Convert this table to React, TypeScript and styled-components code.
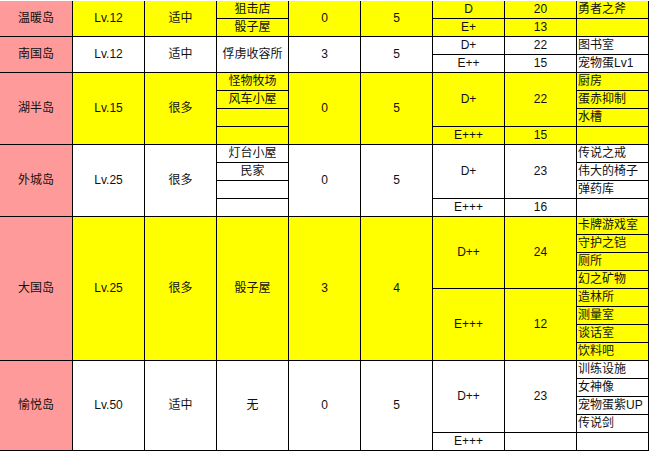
import styled, { createGlobalStyle } from "styled-components";

type Tone = "yellow" | "white";

type Rank = { grade: string; score: string; span: number };

type Island = {
  name: string;
  lv: string;
  amount: string;
  tone: Tone;
  rows: number;
  buildings: string[];
  low: string;
  high: string;
  ranks: Rank[];
  facilities: string[];
};

const ROW = 18;

const islands: Island[] = [
  {
    name: "温暖岛",
    lv: "Lv.12",
    amount: "适中",
    tone: "yellow",
    rows: 2,
    buildings: ["狙击店", "骰子屋"],
    low: "0",
    high: "5",
    ranks: [
      { grade: "D", score: "20", span: 1 },
      { grade: "E+", score: "13", span: 1 },
    ],
    facilities: ["勇者之斧", ""],
  },
  {
    name: "南国岛",
    lv: "Lv.12",
    amount: "适中",
    tone: "white",
    rows: 2,
    buildings: ["俘虏收容所"],
    low: "3",
    high: "5",
    ranks: [
      { grade: "D+", score: "22", span: 1 },
      { grade: "E++", score: "15", span: 1 },
    ],
    facilities: ["图书室", "宠物蛋Lv1"],
  },
  {
    name: "湖半岛",
    lv: "Lv.15",
    amount: "很多",
    tone: "yellow",
    rows: 4,
    buildings: ["怪物牧场", "风车小屋", "", ""],
    low: "0",
    high: "5",
    ranks: [
      { grade: "D+", score: "22", span: 3 },
      { grade: "E+++", score: "15", span: 1 },
    ],
    facilities: ["厨房", "蛋赤抑制", "水槽", ""],
  },
  {
    name: "外城岛",
    lv: "Lv.25",
    amount: "很多",
    tone: "white",
    rows: 4,
    buildings: ["灯台小屋", "民家", "", ""],
    low: "0",
    high: "5",
    ranks: [
      { grade: "D+", score: "23", span: 3 },
      { grade: "E+++", score: "16", span: 1 },
    ],
    facilities: ["传说之戒", "伟大的椅子", "弹药库", ""],
  },
  {
    name: "大国岛",
    lv: "Lv.25",
    amount: "很多",
    tone: "yellow",
    rows: 8,
    buildings: ["骰子屋"],
    low: "3",
    high: "4",
    ranks: [
      { grade: "D++", score: "24", span: 4 },
      { grade: "E+++", score: "12", span: 4 },
    ],
    facilities: [
      "卡牌游戏室",
      "守护之铠",
      "厕所",
      "幻之矿物",
      "造林所",
      "测量室",
      "谈话室",
      "饮料吧",
    ],
  },
  {
    name: "愉悦岛",
    lv: "Lv.50",
    amount: "适中",
    tone: "white",
    rows: 5,
    buildings: ["无"],
    low: "0",
    high: "5",
    ranks: [
      { grade: "D++", score: "23", span: 4 },
      { grade: "E+++", score: "", span: 1 },
    ],
    facilities: ["训练设施", "女神像", "宠物蛋紫UP", "传说剑", ""],
  },
];

const App = () => {
  return (
    <>
      <GlobalStyle />
      <Sheet>
        {islands.map((island) => {
          const merged = island.buildings.length === 1;
          return (
            <Group key={island.name}>
              <Cell $span={island.rows} $fill="pink">
                {island.name}
              </Cell>
              <Cell $span={island.rows} $fill={island.tone}>
                {island.lv}
              </Cell>
              <Cell $span={island.rows} $fill={island.tone}>
                {island.amount}
              </Cell>
              <Column>
                {island.buildings.map((b, i) => (
                  <Cell
                    key={i}
                    $span={merged ? island.rows : 1}
                    $fill={island.tone}
                  >
                    {b}
                  </Cell>
                ))}
              </Column>
              <Cell $span={island.rows} $fill={island.tone}>
                {island.low}
              </Cell>
              <Cell $span={island.rows} $fill={island.tone}>
                {island.high}
              </Cell>
              <Column>
                {island.ranks.map((r, i) => (
                  <Cell key={i} $span={r.span} $fill={island.tone}>
                    {r.grade}
                  </Cell>
                ))}
              </Column>
              <Column>
                {island.ranks.map((r, i) => (
                  <Cell key={i} $span={r.span} $fill={island.tone}>
                    {r.score}
                  </Cell>
                ))}
              </Column>
              <Column>
                {island.facilities.map((f, i) => (
                  <Cell key={i} $span={1} $fill={island.tone} $left>
                    {f}
                  </Cell>
                ))}
              </Column>
            </Group>
          );
        })}
      </Sheet>
    </>
  );
};

const fills = {
  pink: "#ff9a9a",
  yellow: "#ffff00",
  white: "#ffffff",
};

const GlobalStyle = createGlobalStyle`
  html, body {
    margin: 0;
    padding: 0;
    background: #ffffff;
    overflow: hidden;
  }

  body {
    font-family: "Liberation Sans", "Noto Sans CJK SC", sans-serif;
    font-size: 12px;
    color: #111111;
  }
`;

const Sheet = styled.div`
  display: flex;
  flex-direction: column;
  width: 649px;
  padding-top: 1px;
`;

const Group = styled.div`
  display: grid;
  grid-template-columns: 73px repeat(8, 72px);
`;

const Column = styled.div`
  display: flex;
  flex-direction: column;
`;

const Cell = styled.div<{
  $span: number;
  $fill: keyof typeof fills;
  $left?: boolean;
}>`
  box-sizing: border-box;
  height: ${(p) => p.$span * ROW}px;
  display: flex;
  align-items: center;
  justify-content: ${(p) => (p.$left ? "flex-start" : "center")};
  padding-left: ${(p) => (p.$left ? "1px" : "0")};
  border-right: 1px solid #000000;
  border-bottom: 1px solid #000000;
  background-color: ${(p) => fills[p.$fill]};
  white-space: nowrap;
  overflow: hidden;
  line-height: 17px;
`;

export default App;
